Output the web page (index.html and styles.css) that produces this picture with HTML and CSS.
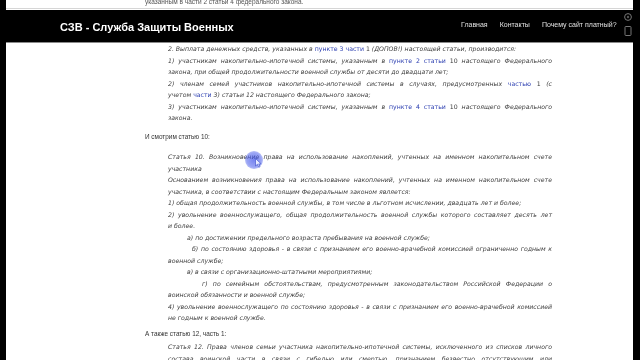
FILE: index.html
```html
<!DOCTYPE html>
<html lang="ru">
<head>
<meta charset="utf-8">
<title>СЗВ - Служба Защиты Военных</title>
<link rel="stylesheet" href="styles.css">
</head>
<body>
<div class="frame">
  <div class="strip"><div class="strip-text">указанным в части 2 статьи 4 федерального закона.</div></div>
  <header class="header">
    <div class="brand">СЗВ - Служба Защиты Военных</div>
    <nav class="nav">
      <a class="nav-link">Главная</a>
      <a class="nav-link">Контакты</a>
      <a class="nav-link">Почему сайт платный?</a>
    </nav>
    <svg class="side-icons" width="10" height="24" viewBox="0 0 10 24">
      <circle cx="5" cy="5" r="3.4" fill="none" stroke="#777" stroke-width="1"/>
      <circle cx="5" cy="5" r="1.2" fill="#555"/>
      <rect x="2" y="14.5" width="6" height="9" rx="0.8" fill="none" stroke="#777" stroke-width="1"/>
    </svg>
  </header>
  <main class="content">
    <div class="quote q1">
      <div class="ln">2. Выплата денежных средств, указанных в <a class="lk">пункте 3 части</a> <span class="num">1</span> (ДОПОВ!) настоящей статьи, производится:</div>
      <div class="ln j">1) участникам накопительно-ипотечной системы, указанным в <a class="lk">пункте 2 статьи</a> <span class="num">10</span> настоящего Федерального</div>
      <div class="ln">закона, при общей продолжительности военной службы от десяти до двадцати лет;</div>
      <div class="ln j">2) членам семей участников накопительно-ипотечной системы в случаях, предусмотренных <a class="lk">частью</a> <span class="num">1</span> (с</div>
      <div class="ln">учетом <a class="lk">части</a> 3) статьи 12 настоящего Федерального закона;</div>
      <div class="ln j">3) участникам накопительно-ипотечной системы, указанным в <a class="lk">пункте 4 статьи</a> <span class="num">10</span> настоящего Федерального</div>
      <div class="ln">закона.</div>
    </div>
    <p class="plain p1">И смотрим статью 10:</p>
    <div class="quote q2">
      <div class="ln j">Статья 10. Возникновение права на использование накоплений, учтенных на именном накопительном счете</div>
      <div class="ln">участника</div>
      <div class="ln j">Основанием возникновения права на использование накоплений, учтенных на именном накопительном счете</div>
      <div class="ln">участника, в соответствии с настоящим Федеральным законом является:</div>
      <div class="ln">1) общая продолжительность военной службы, в том числе в льготном исчислении, двадцать лет и более;</div>
      <div class="ln j">2) увольнение военнослужащего, общая продолжительность военной службы которого составляет десять лет</div>
      <div class="ln">и более.</div>
      <div class="ln ind-a">а) по достижении предельного возраста пребывания на военной службе;</div>
      <div class="ln j ind-b">б) по состоянию здоровья - в связи с признанием его военно-врачебной комиссией ограниченно годным к</div>
      <div class="ln">военной службе;</div>
      <div class="ln ind-a">в) в связи с организационно-штатными мероприятиями;</div>
      <div class="ln j ind-g">г) по семейным обстоятельствам, предусмотренным законодательством Российской Федерации о</div>
      <div class="ln">воинской обязанности и военной службе;</div>
      <div class="ln j">4) увольнение военнослужащего по состоянию здоровья - в связи с признанием его военно-врачебной комиссией</div>
      <div class="ln">не годным к военной службе.</div>
    </div>
    <p class="plain p2">А также статью 12, часть 1:</p>
    <div class="quote q3">
      <div class="ln j">Статья 12. Права членов семьи участника накопительно-ипотечной системы, исключенного из списков личного</div>
      <div class="ln j">состава воинской части в связи с гибелью или смертью, признанием безвестно отсутствующим или</div>
    </div>
  </main>
  <div class="cursor">
    <svg class="pointer" width="7" height="10" viewBox="0 0 7 10">
      <path d="M0.5 0.5 L0.5 8 L2.4 6.3 L3.8 9.3 L5 8.7 L3.7 5.9 L6.2 5.9 Z" fill="#e8ecff" stroke="#3346c8" stroke-width="0.6"/>
    </svg>
  </div>
</div>
</body>
</html>
```

FILE: styles.css
```css
html, body {
  margin: 0;
  padding: 0;
  background: #000;
}
body {
  width: 640px;
  height: 360px;
  overflow: hidden;
}
.frame {
  position: relative;
  margin: 0 7px 0 6px;
  height: 360px;
  background: #fff;
  overflow: hidden;
}
.strip {
  height: 8px;
  overflow: hidden;
  border-bottom: 1px solid #d6d6d6;
  margin-bottom: 1px;
  padding-left: 139px;
}
.strip-text {
  margin-top: -4px;
  font-family: "Liberation Sans", Arial, sans-serif;
  font-size: 6.5px;
  line-height: 11.5px;
  color: #555;
  will-change: transform;
}
.header {
  position: relative;
  height: 32px;
  background: #000;
  border-bottom: 1px solid #8a8a8a;
  margin: 0 -7px 0 -6px;
  display: flex;
  align-items: center;
  padding: 0 23px 0 60px;
}
.brand {
  font-family: "Liberation Sans", Arial, sans-serif;
  font-weight: bold;
  font-size: 11px;
  color: #fff;
  margin-top: 2px;
  will-change: transform;
}
.nav {
  margin-left: auto;
  display: flex;
  gap: 12px;
  margin-top: -3px;
  will-change: transform;
}
.nav-link {
  font-family: "Liberation Sans", Arial, sans-serif;
  font-size: 7px;
  color: #e0e0e0;
}
.side-icons {
  position: absolute;
  right: 7px;
  top: 2px;
}
.content {
  margin-left: 139px;
  width: 430px;
  will-change: transform;
}
.quote {
  margin: 0 23px;
  font-family: "DejaVu Sans", sans-serif;
  font-style: italic;
  font-size: 6.2px;
  line-height: 11.5px;
  color: #3c3c3c;
}
.ln {
  white-space: nowrap;
}
.j {
  text-align: justify;
  text-align-last: justify;
}
.lk {
  font-style: normal;
  color: #2a3db0;
}
.num {
  font-style: normal;
  color: #3c3c3c;
}
.ind-a { padding-left: 19px; }
.ind-b { padding-left: 24px; }
.ind-g { padding-left: 34px; }
.plain {
  font-family: "Liberation Sans", Arial, sans-serif;
  font-size: 6.4px;
  line-height: 11.5px;
  color: #333;
  margin: 0;
}
.p1 { margin: 7px 0 9px; }
.p2 { margin: 4px 0 2px; }
.cursor {
  position: absolute;
  left: 239px;
  top: 151px;
  width: 18px;
  height: 18px;
  border-radius: 50%;
  background: radial-gradient(circle, rgba(60,80,235,0.7) 0%, rgba(70,90,235,0.55) 55%, rgba(90,110,240,0.1) 100%);
}
.pointer {
  position: absolute;
  left: 10px;
  top: 7px;
}
```
